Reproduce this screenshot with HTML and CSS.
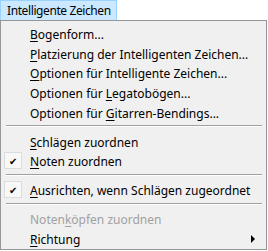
FILE: index.html
```html
<!DOCTYPE html>
<html>
<head>
<meta charset="utf-8">
<link rel="stylesheet" href="styles.css">
</head>
<body>
<div class="menubar">
  <div class="menu-title">Intelligente Zeichen</div>
</div>
<div class="dropdown">
  <div class="item"><span class="label"><u>B</u>ogenform...</span></div>
  <div class="item"><span class="label"><u>P</u>latzierung der Intelligenten Zeichen...</span></div>
  <div class="item"><span class="label"><u>O</u>ptionen für Intelligente Zeichen...</span></div>
  <div class="item"><span class="label">Optionen für <u>L</u>egatobögen...</span></div>
  <div class="item"><span class="label">Optionen für <u>G</u>itarren-Bendings...</span></div>
  <div class="sep"></div>
  <div class="item"><span class="label"><u>S</u>chlägen zuordnen</span></div>
  <div class="item checked"><span class="check">✔</span><span class="label"><u>N</u>oten zuordnen</span></div>
  <div class="sep"></div>
  <div class="item checked"><span class="check">✔</span><span class="label"><u>A</u>usrichten, wenn Schlägen zugeordnet</span></div>
  <div class="sep"></div>
  <div class="item disabled"><span class="label">Noten<u>k</u>öpfen zuordnen</span></div>
  <div class="item"><span class="label"><u>R</u>ichtung</span><span class="arrow"></span></div>
</div>
</body>
</html>
```
FILE: styles.css
```css
html, body {
  margin: 0;
  padding: 0;
  background: #ffffff;
}
body {
  width: 268px;
  height: 251px;
  font-family: "Noto Sans", "Open Sans", sans-serif;
  font-size: 12px;
  color: #000;
}
.menubar {
  display: flex;
  height: 20px;
}
.menu-title {
  box-sizing: border-box;
  width: 117px;
  height: 20px;
  padding-left: 6px;
  padding-top: 1px;
  line-height: 18px;
  white-space: nowrap;
  letter-spacing: -0.4px;
  background: #cce8ff;
  border: 1px solid #99d1ff;
  border-bottom: none;
}
.dropdown {
  box-sizing: border-box;
  width: 267px;
  height: 230px;
  background: #f0f0f0;
  border: 1px solid #979797;
  padding: 2px 2px 1px 2px;
  display: flex;
  flex-direction: column;
}
.item {
  position: relative;
  box-sizing: border-box;
  height: 19.7px;
  padding-top: 3px;
  display: flex;
  align-items: center;
  padding-left: 27px;
  white-space: nowrap;
}
.item u {
  text-decoration: underline;
  text-underline-offset: 2px;
}
.check {
  position: absolute;
  left: 1px;
  top: 2px;
  width: 18px;
  height: 17px;
  box-sizing: border-box;
  display: flex;
  align-items: center;
  justify-content: center;
  font-size: 10px;
  color: #000;
  background: #f8f8f8;
  border: 1px solid #dcdcdc;
}
.disabled {
  color: #a0a0a0;
}
.arrow {
  position: absolute;
  right: 9px;
  top: 7px;
  width: 0;
  height: 0;
  border-top: 4px solid transparent;
  border-bottom: 4px solid transparent;
  border-left: 4px solid #000;
}
.sep {
  height: 9.3px;
  display: flex;
  align-items: center;
  padding: 0 2px 0 3px;
}
.sep::before {
  content: "";
  flex: 1;
  height: 1px;
  background: #a0a0a0;
  border-bottom: 1px solid #ffffff;
}
```
